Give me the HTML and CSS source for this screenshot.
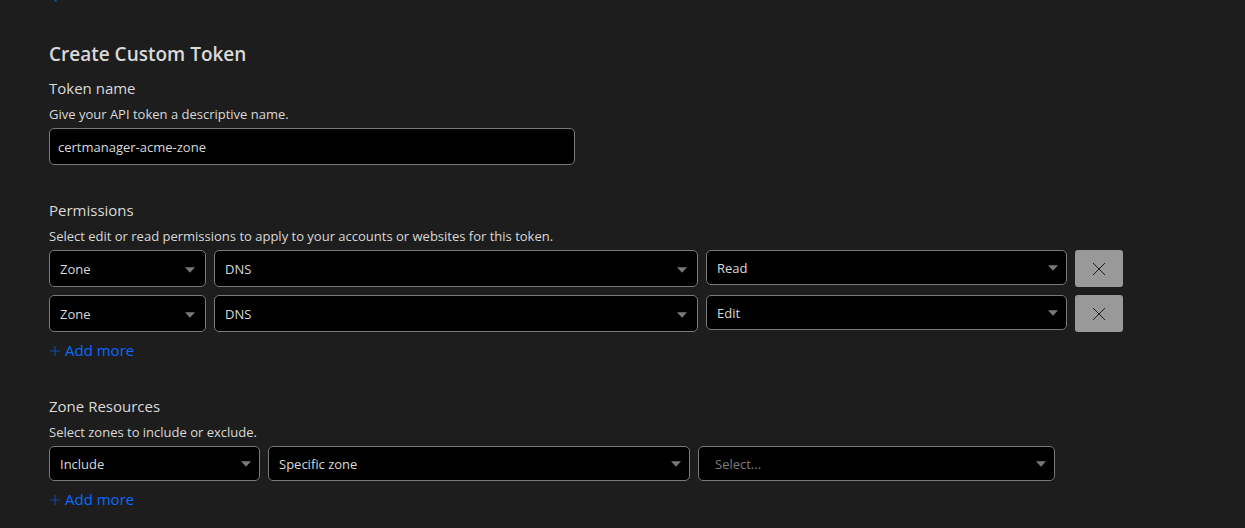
FILE: index.html
```html
<!DOCTYPE html>
<html lang="en">
<head>
<meta charset="utf-8">
<title>Create Custom Token</title>
<meta name="viewport" content="width=device-width, initial-scale=1">
<link rel="stylesheet" href="styles.css">
</head>
<body>
<svg class="symbols" aria-hidden="true">
  <symbol id="caret" viewBox="0 0 10 6"><path d="M0 0.3h10L5 5.8z" fill="currentColor"/></symbol>
  <symbol id="cross" viewBox="0 0 14 14"><path d="M1 1l12 12M13 1L1 13" fill="none" stroke="currentColor" stroke-width="1"/></symbol>
  <symbol id="plus" viewBox="0 0 10 10"><path d="M0 5h10M5 0v10" fill="none" stroke="currentColor" stroke-width="1.2"/></symbol>
</svg>
<main class="page">
  <svg class="back-tip" viewBox="0 0 3 2" aria-hidden="true"><path d="M0 0h3L2 2z" fill="currentColor"/></svg>
  <h1 class="title">Create Custom Token</h1>

  <section class="section">
    <label class="heading" for="token-name">Token name</label>
    <p class="hint">Give your API token a descriptive name.</p>
    <input class="text-input" id="token-name" type="text" value="certmanager-acme-zone" spellcheck="false">
  </section>

  <section class="section">
    <h2 class="heading">Permissions</h2>
    <p class="hint">Select edit or read permissions to apply to your accounts or websites for this token.</p>
    <div class="rows">
      <div class="row row-permission">
        <div class="select select-tall"><select aria-label="Permission scope 1"><option>Zone</option></select><svg class="caret"><use href="#caret"/></svg></div>
        <div class="select select-tall"><select aria-label="Permission item 1"><option>DNS</option></select><svg class="caret"><use href="#caret"/></svg></div>
        <div class="select"><select aria-label="Access level 1"><option>Read</option></select><svg class="caret"><use href="#caret"/></svg></div>
        <button class="remove" type="button" aria-label="Remove permission 1"><svg class="cross"><use href="#cross"/></svg></button>
      </div>
      <div class="row row-permission">
        <div class="select select-tall"><select aria-label="Permission scope 2"><option>Zone</option></select><svg class="caret"><use href="#caret"/></svg></div>
        <div class="select select-tall"><select aria-label="Permission item 2"><option>DNS</option></select><svg class="caret"><use href="#caret"/></svg></div>
        <div class="select"><select aria-label="Access level 2"><option>Edit</option></select><svg class="caret"><use href="#caret"/></svg></div>
        <button class="remove" type="button" aria-label="Remove permission 2"><svg class="cross"><use href="#cross"/></svg></button>
      </div>
    </div>
    <button class="add" type="button"><svg class="plus"><use href="#plus"/></svg>Add more</button>
  </section>

  <section class="section">
    <h2 class="heading">Zone Resources</h2>
    <p class="hint">Select zones to include or exclude.</p>
    <div class="row row-zone">
      <div class="select"><select aria-label="Include or exclude"><option>Include</option></select><svg class="caret"><use href="#caret"/></svg></div>
      <div class="select"><select aria-label="Zone type"><option>Specific zone</option></select><svg class="caret"><use href="#caret"/></svg></div>
      <div class="select select-empty"><select aria-label="Zone"><option>Select...</option></select><svg class="caret"><use href="#caret"/></svg></div>
    </div>
    <button class="add" type="button"><svg class="plus"><use href="#plus"/></svg>Add more</button>
  </section>
</main>
</body>
</html>
```
FILE: styles.css
```css
* {
  box-sizing: border-box;
}

body {
  margin: 0;
  background: #1d1d1d;
  color: #d9d9d9;
  font-family: "Segoe UI", "Open Sans", "Noto Sans", sans-serif;
  font-size: 13px;
  line-height: 20px;
}

.symbols {
  display: none;
}

.page {
  padding: 0 122px 0 49px;
}

.back-tip {
  display: block;
  width: 3px;
  height: 2px;
  margin-left: 5px;
  color: #0b51c5;
}

.title {
  margin: 38px 0 8px;
  font-size: 19px;
  line-height: 28px;
  font-weight: 600;
}

.section {
  margin-bottom: 33px;
}

.section:last-child {
  margin-bottom: 0;
}

.heading {
  display: block;
  margin: 0;
  font-size: 15px;
  line-height: 24px;
  font-weight: 400;
}

.hint {
  margin: 4px 0;
}

.text-input {
  display: block;
  width: 49%;
  height: 37px;
  padding: 0 8px;
  border: 1px solid #797979;
  border-radius: 5px;
  background: #000;
  color: inherit;
  font: inherit;
}

.rows {
  display: grid;
  gap: 8px;
}

.row {
  display: grid;
  gap: 8px;
  align-items: start;
}

.row-permission {
  grid-template-columns: 157fr 484fr 361fr 48px;
}

.row-zone {
  grid-template-columns: 211fr 422fr 357fr;
  margin-right: 68px;
}

.select {
  display: grid;
  grid-template-columns: minmax(0, 1fr);
  align-items: center;
  height: 35px;
}

.select-tall {
  height: 37px;
}

.select select {
  grid-area: 1 / 1;
  width: 100%;
  height: 100%;
  padding: 0 28px 0 10px;
  border: 1px solid #797979;
  border-radius: 5px;
  background: #000;
  color: inherit;
  font: inherit;
  appearance: none;
}

.select-empty select {
  padding-left: 16px;
  color: #7d7d7d;
}

.caret {
  grid-area: 1 / 1;
  justify-self: end;
  width: 10px;
  height: 6px;
  margin-right: 9px;
  color: #797979;
  pointer-events: none;
}

.select-tall .caret {
  margin-right: 11px;
  margin-top: 2px;
}

.remove {
  display: grid;
  place-items: center;
  width: 48px;
  height: 37px;
  padding: 0;
  border: 0;
  border-radius: 3px;
  background: #999;
  color: #1d1d1d;
}

.cross {
  width: 14px;
  height: 14px;
}

.add {
  display: flex;
  align-items: center;
  gap: 5px;
  margin-top: 8px;
  padding: 0 1px;
  border: 0;
  background: none;
  color: #0a69ff;
  font: inherit;
  font-size: 15px;
  line-height: 21px;
}

.plus {
  width: 10px;
  height: 10px;
  color: #104a9e;
}
```
